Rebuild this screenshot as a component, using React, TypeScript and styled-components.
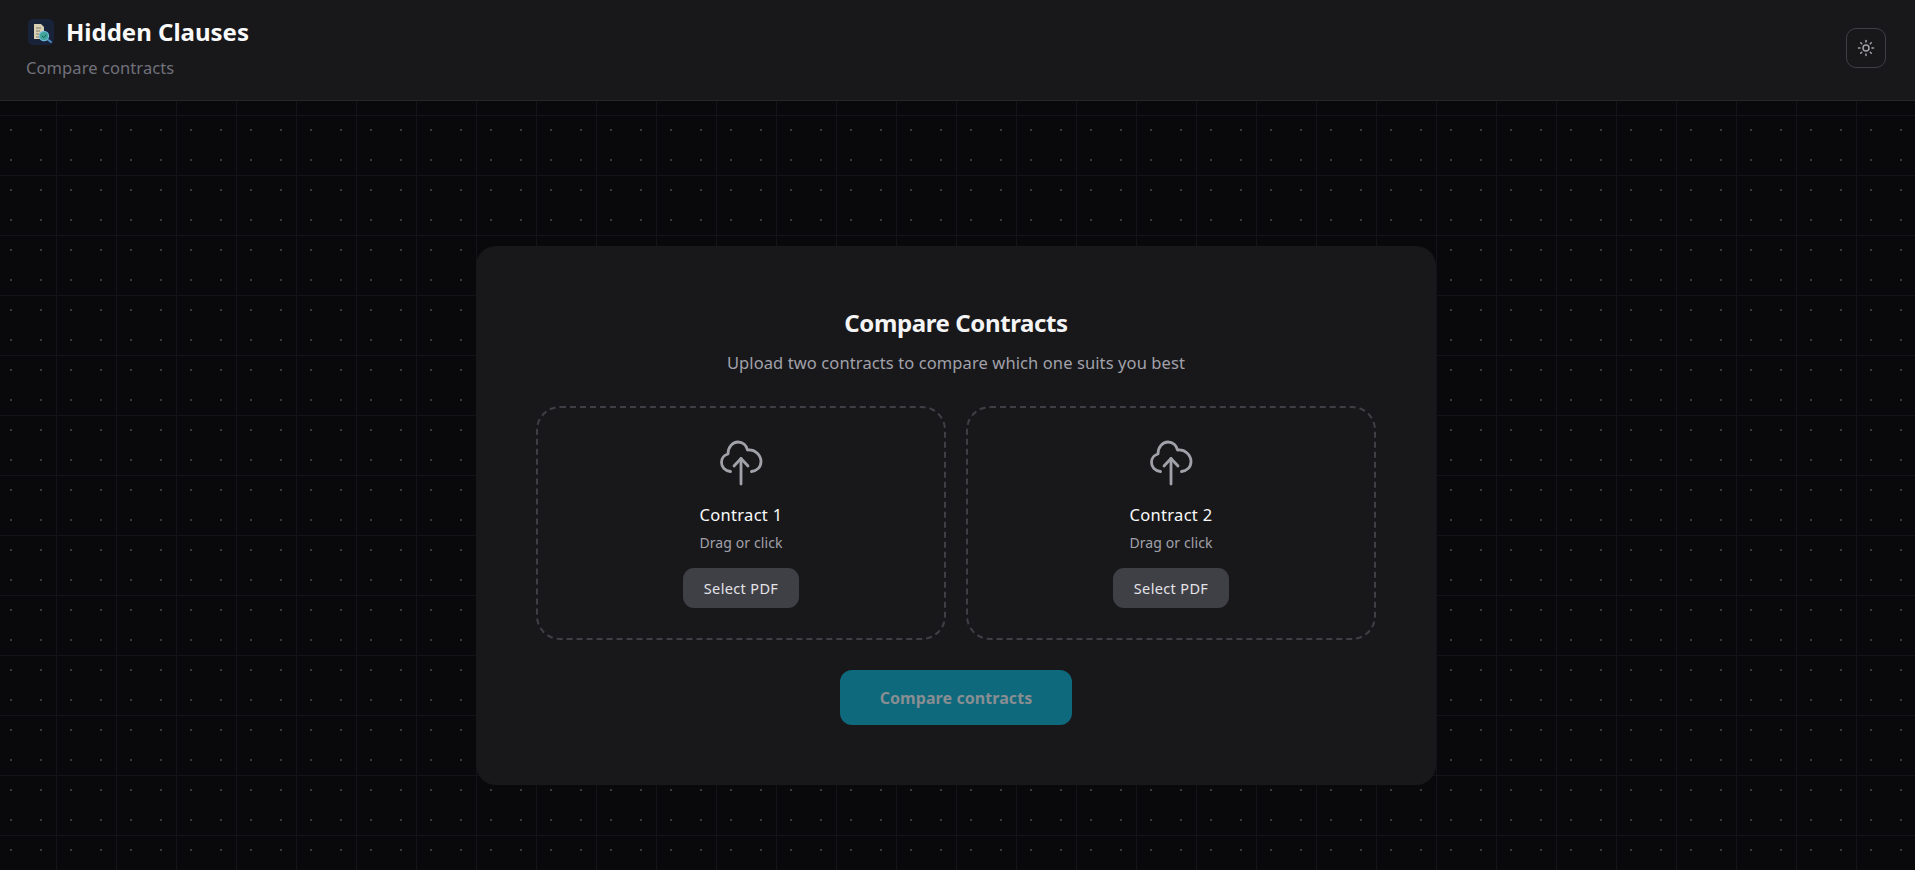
import React from "react";
import styled, { createGlobalStyle } from "styled-components";
import { Sun } from "lucide-react";

const GlobalStyle = createGlobalStyle`
  html, body {
    margin: 0;
    padding: 0;
    background: #09090b;
  }

  * {
    box-sizing: border-box;
  }

  body {
    font-family: "Noto Sans", "Open Sans", sans-serif;
  }
`;

const Page = styled.div`
  height: 100vh;
  overflow: hidden;
  background-color: #09090b;
  background-image:
    radial-gradient(circle, #3a3a3d 1px, transparent 1.2px),
    linear-gradient(to right, #131417 1px, transparent 1px),
    linear-gradient(to bottom, #131417 1px, transparent 1px);
  background-size: 30px 30px, 60px 60px, 60px 60px;
  background-position: -4px -5px;
`;

const Header = styled.header`
  height: 101px;
  display: flex;
  justify-content: space-between;
  align-items: flex-start;
  padding: 14px 29px 0 26px;
  background: #18181b;
  border-bottom: 1px solid #27272a;
`;

const Brand = styled.div`
  display: flex;
  flex-direction: column;
  gap: 6px;
`;

const BrandRow = styled.div`
  display: flex;
  align-items: center;
  gap: 12px;
  padding-left: 2px;
`;

const Logo = styled.svg`
  width: 26px;
  height: 26px;
  flex: none;
`;

const BrandName = styled.h1`
  margin: 0;
  font-size: 24px;
  line-height: 36px;
  font-weight: 700;
  color: #fafafa;
`;

const BrandTagline = styled.p`
  margin: 0;
  font-size: 16.5px;
  line-height: 24px;
  color: #71717a;
  letter-spacing: 0.08px;
`;

const ThemeButton = styled.button`
  width: 40px;
  height: 40px;
  margin-top: 14px;
  display: flex;
  align-items: center;
  justify-content: center;
  padding: 0;
  background: transparent;
  border: 1px solid #3f3f46;
  border-radius: 10px;
  color: #a1a1aa;
`;

const Main = styled.main`
  display: flex;
  justify-content: center;
  padding: 145px 3px 0 0;
`;

const Card = styled.section`
  width: 960px;
  height: 539px;
  padding: 59px 60px 0;
  background: #18181b;
  border-radius: 20px;
  display: flex;
  flex-direction: column;
  align-items: center;
`;

const Title = styled.h2`
  margin: 0;
  font-size: 24px;
  line-height: 36px;
  font-weight: 700;
  color: #f4f4f5;
  letter-spacing: -0.4px;
`;

const Description = styled.p`
  margin: 10px 0 31px;
  font-size: 16.5px;
  line-height: 24px;
  color: #a1a1aa;
  letter-spacing: 0.1px;
`;

const Zones = styled.div`
  width: 100%;
  display: grid;
  grid-template-columns: 1fr 1fr;
  gap: 20px;
`;

const Zone = styled.div`
  height: 234px;
  padding-top: 32px;
  display: flex;
  flex-direction: column;
  align-items: center;
  border: 2px dashed #3f3f46;
  border-radius: 24px;
`;

const ZoneIcon = styled.svg`
  width: 64px;
  height: 64px;
  margin-top: -10px;
  margin-bottom: -2px;
  fill: none;
  stroke: #a1a1aa;
  stroke-width: 2.8;
  stroke-linecap: round;
  stroke-linejoin: round;
`;

const ZoneName = styled.div`
  margin-top: 11px;
  font-size: 16.5px;
  line-height: 24px;
  font-weight: 400;
  color: #fafafa;
  letter-spacing: 0.3px;
`;

const ZoneHint = styled.div`
  margin-top: 6px;
  font-size: 14px;
  line-height: 20px;
  color: #a1a1aa;
  letter-spacing: 0.1px;
`;

const SelectButton = styled.button`
  width: 116px;
  height: 40px;
  margin-top: 15px;
  padding: 0;
  border: none;
  border-radius: 11px;
  background: #3f3f46;
  color: #e4e4e7;
  font-family: inherit;
  font-size: 14.5px;
  font-weight: 400;
  letter-spacing: 0.35px;
`;

const CompareButton = styled.button`
  width: 232px;
  height: 55px;
  margin-top: 30px;
  padding: 0;
  border: none;
  border-radius: 12px;
  background: #0e697c;
  color: #888e92;
  font-family: inherit;
  font-size: 16px;
  font-weight: 700;
  letter-spacing: 0.08px;
`;

const CloudUpload = () => (
  <ZoneIcon viewBox="-1 0 64 64">
    <path d="M20.5 41.5C15 41 11.5 37 11.5 32.5C11.5 28 14.5 25 18 24C18 17 22.5 12 28 12C33 12 36.5 15.5 37.5 20C45 19 51 25 51 31.5C51 37 47 41 41.5 41.5" />
    <path d="M31 54V28.5" />
    <path d="M24 36L31 28.5L38 36" />
  </ZoneIcon>
);

const contracts = ["Contract 1", "Contract 2"];

const App = () => {
  return (
    <Page>
      <GlobalStyle />
      <Header>
        <Brand>
          <BrandRow>
            <Logo viewBox="0 0 26 26">
              <rect width="26" height="26" rx="5" fill="#18233a" />
              <path d="M6 5h7l3 3v12H6z" fill="#d9cfb4" />
              <path d="M8 9h5M8 12h4M8 15h3M8 18h4" stroke="#7f7a68" strokeWidth="1" />
              <path d="M19 20l4 3" stroke="#4d8fc0" strokeWidth="2" strokeLinecap="round" />
              <circle cx="16" cy="17" r="4.6" fill="#3fa59a" stroke="#6fb7d8" strokeWidth="1.2" />
              <path d="M14 17l1.6 1.6 2.6-2.8" fill="none" stroke="#1d5f57" strokeWidth="1" />
            </Logo>
            <BrandName>Hidden Clauses</BrandName>
          </BrandRow>
          <BrandTagline>Compare contracts</BrandTagline>
        </Brand>
        <ThemeButton aria-label="Toggle theme">
          <Sun size={18} strokeWidth={2} />
        </ThemeButton>
      </Header>
      <Main>
        <Card>
          <Title>Compare Contracts</Title>
          <Description>Upload two contracts to compare which one suits you best</Description>
          <Zones>
            {contracts.map((name) => (
              <Zone key={name}>
                <CloudUpload />
                <ZoneName>{name}</ZoneName>
                <ZoneHint>Drag or click</ZoneHint>
                <SelectButton>Select PDF</SelectButton>
              </Zone>
            ))}
          </Zones>
          <CompareButton>Compare contracts</CompareButton>
        </Card>
      </Main>
    </Page>
  );
};

export default App;
